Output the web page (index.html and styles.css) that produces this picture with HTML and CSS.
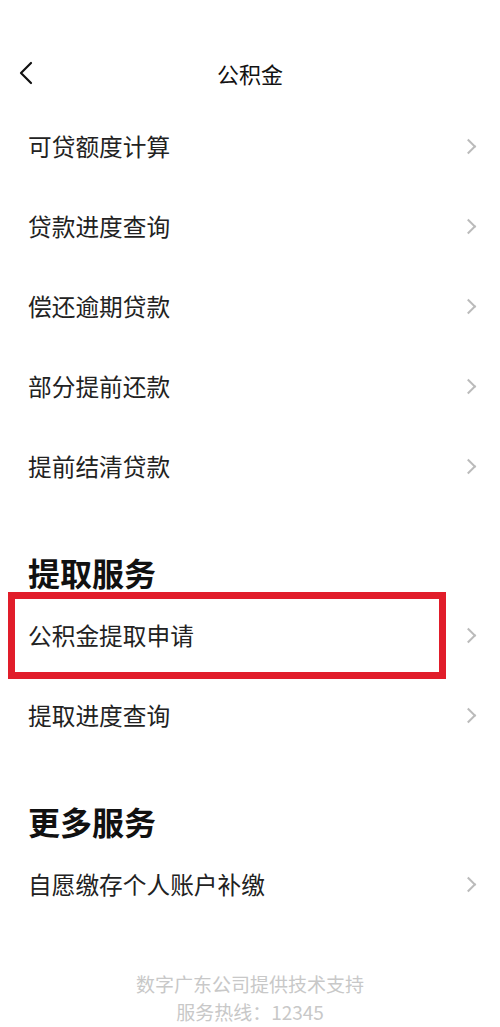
FILE: index.html
```html
<!DOCTYPE html>
<html lang="zh-CN">
<head>
  <meta charset="UTF-8" />
  <meta name="viewport" content="width=device-width, initial-scale=1" />
  <title>公积金</title>
  <link rel="stylesheet" href="styles.css">
</head>
<body>

<header class="topbar">
  <span class="back">
    <svg width="16" height="24" viewBox="0 0 16 24"><path d="M13 2 L3 12 L13 22" fill="none" stroke="#111" stroke-width="2.2" stroke-linecap="round" stroke-linejoin="round"/></svg>
  </span>
  <h1>公积金</h1>
</header>

<ul class="list">
  <li class="row">可贷额度计算<i class="arrow"></i></li>
  <li class="row">贷款进度查询<i class="arrow"></i></li>
  <li class="row">偿还逾期贷款<i class="arrow"></i></li>
  <li class="row">部分提前还款<i class="arrow"></i></li>
  <li class="row">提前结清贷款<i class="arrow"></i></li>
</ul>

<h2 class="section">提取服务</h2>
<ul class="list">
  <li class="row marked">公积金提取申请<i class="arrow"></i></li>
  <li class="row">提取进度查询<i class="arrow"></i></li>
</ul>

<h2 class="section">更多服务</h2>
<ul class="list">
  <li class="row">自愿缴存个人账户补缴<i class="arrow"></i></li>
</ul>

<footer class="foot">
  <p>数字广东公司提供技术支持</p>
  <p>服务热线：12345</p>
</footer>

</body>
</html>
```

FILE: styles.css
```css
body {
  margin: 0; background: #fff; color: #1a1a1a;
  font-family: "Noto Sans CJK SC", "Noto Sans", sans-serif;
}
.topbar {
  position: relative; height: 66px; margin-top: 40px;
  display: flex; align-items: center; justify-content: center;
}
.topbar h1 { margin: 0; font-size: 22px; font-weight: 400; color: #111; }
.back { position: absolute; left: 18px; top: 21px; width: 16px; height: 24px; }
.back svg { display: block; }
.list { list-style: none; margin: 0; padding: 0; }
.row {
  position: relative; height: 80px; padding: 0 22px 0 28px;
  display: flex; align-items: center; justify-content: space-between;
  font-size: 23.7px; color: #222;
}
.arrow {
  width: 9px; height: 9px; margin-right: 4px;
  border-top: 2px solid #bbb; border-right: 2px solid #bbb;
  transform: rotate(45deg);
}
.marked::after {
  content: ""; position: absolute; left: 8px; right: 54px; top: -3px; bottom: -4px;
  border: 7px solid #e11d2a;
}
.section {
  margin: 44px 0 0; padding-left: 28px; line-height: 45px;
  font-size: 32px; font-weight: 700; color: #111;
}
.foot { margin-top: 46px; text-align: center; color: #c8c8c8; font-size: 19px; }
.foot p { margin: 0; line-height: 28px; }
```
